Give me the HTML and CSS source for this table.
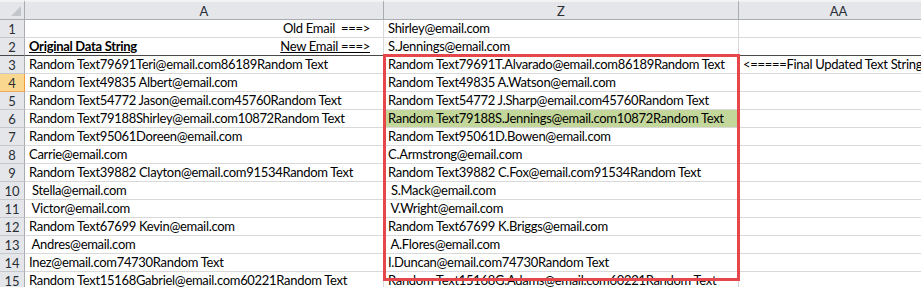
FILE: index.html
```html
<!DOCTYPE html>
<html>
<head>
<meta charset="utf-8">
<link rel="stylesheet" href="styles.css">
</head>
<body>
<div class="sheet">
  <div class="grid">
    <div class="corner"><span class="tri"></span></div>
    <div class="colhead">A</div>
    <div class="colhead">Z</div>
    <div class="colhead">AA</div>

    <div class="rowhead">1</div>
    <div class="cell right"><span class="pre">Old Email  ===&gt;</span></div>
    <div class="cell">Shirley@email.com</div>
    <div class="cell"></div>

    <div class="rowhead r2">2</div>
    <div class="cell split r2"><span class="bold u">Original Data String</span><span class="u">New Email ===&gt;</span></div>
    <div class="cell r2">S.Jennings@email.com</div>
    <div class="cell r2"></div>

    <div class="rowhead">3</div>
    <div class="cell">Random Text79691Teri@email.com86189Random Text</div>
    <div class="cell">Random Text79691T.Alvarado@email.com86189Random Text</div>
    <div class="cell">&lt;=====Final Updated Text String</div>

    <div class="rowhead active">4</div>
    <div class="cell">Random Text49835 Albert@email.com</div>
    <div class="cell">Random Text49835 A.Watson@email.com</div>
    <div class="cell"></div>

    <div class="rowhead">5</div>
    <div class="cell">Random Text54772 Jason@email.com45760Random Text</div>
    <div class="cell">Random Text54772 J.Sharp@email.com45760Random Text</div>
    <div class="cell"></div>

    <div class="rowhead">6</div>
    <div class="cell">Random Text79188Shirley@email.com10872Random Text</div>
    <div class="cell green">Random Text79188S.Jennings@email.com10872Random Text</div>
    <div class="cell"></div>

    <div class="rowhead">7</div>
    <div class="cell">Random Text95061Doreen@email.com</div>
    <div class="cell">Random Text95061D.Bowen@email.com</div>
    <div class="cell"></div>

    <div class="rowhead">8</div>
    <div class="cell">Carrie@email.com</div>
    <div class="cell">C.Armstrong@email.com</div>
    <div class="cell"></div>

    <div class="rowhead">9</div>
    <div class="cell">Random Text39882 Clayton@email.com91534Random Text</div>
    <div class="cell">Random Text39882 C.Fox@email.com91534Random Text</div>
    <div class="cell"></div>

    <div class="rowhead">10</div>
    <div class="cell"><span class="pre"> Stella@email.com</span></div>
    <div class="cell"><span class="pre"> S.Mack@email.com</span></div>
    <div class="cell"></div>

    <div class="rowhead">11</div>
    <div class="cell"><span class="pre"> Victor@email.com</span></div>
    <div class="cell"><span class="pre"> V.Wright@email.com</span></div>
    <div class="cell"></div>

    <div class="rowhead">12</div>
    <div class="cell">Random Text67699 Kevin@email.com</div>
    <div class="cell">Random Text67699 K.Briggs@email.com</div>
    <div class="cell"></div>

    <div class="rowhead">13</div>
    <div class="cell"><span class="pre"> Andres@email.com</span></div>
    <div class="cell"><span class="pre"> A.Flores@email.com</span></div>
    <div class="cell"></div>

    <div class="rowhead">14</div>
    <div class="cell">Inez@email.com74730Random Text</div>
    <div class="cell">I.Duncan@email.com74730Random Text</div>
    <div class="cell"></div>

    <div class="rowhead">15</div>
    <div class="cell">Random Text15168Gabriel@email.com60221Random Text</div>
    <div class="cell">Random Text15168G.Adams@email.com60221Random Text</div>
    <div class="cell"></div>
  </div>
  <div class="redbox"></div>
</div>
</body>
</html>
```
FILE: styles.css
```css
html, body {
  margin: 0;
  padding: 0;
  background: #ffffff;
}
.sheet {
  position: relative;
  width: 921px;
  height: 287px;
  overflow: hidden;
  font-family: "Lato", "Open Sans", sans-serif;
  font-size: 13px;
  letter-spacing: -0.3px;
  color: #000;
}
.grid {
  display: grid;
  grid-template-columns: 25px 359px 355px 200px;
  grid-template-rows: 20px repeat(15, 18px);
}
.corner {
  position: relative;
  background: #e4e6ea;
  border-top: 2px solid #f3f3f3;
  border-right: 1px solid #a9adb3;
  border-bottom: 1px solid #a9adb3;
  box-sizing: border-box;
}
.tri {
  position: absolute;
  right: 3px;
  bottom: 3px;
  width: 0;
  height: 0;
  border-left: 10px solid transparent;
  border-bottom: 10px solid #c3c7cc;
}
.colhead {
  background: #e4e6ea;
  border-top: 2px solid #f3f3f3;
  border-right: 1px solid #a9adb3;
  border-bottom: 1px solid #a9adb3;
  box-sizing: border-box;
  display: flex;
  align-items: center;
  justify-content: center;
  color: #2a2f36;
  letter-spacing: 0;
}
.rowhead {
  background: #e4e6ea;
  border-right: 1px solid #a9adb3;
  border-bottom: 1px solid #c5c9ce;
  box-sizing: border-box;
  display: flex;
  align-items: center;
  justify-content: center;
  color: #2a2f36;
  letter-spacing: 0;
}
.rowhead.active {
  background: #f9d78f;
  border-right: 1px solid #f29b3c;
  border-bottom: 1px solid #f2a95a;
}
.cell {
  border-right: 1px solid #d9d9d9;
  border-bottom: 1px solid #d9d9d9;
  box-sizing: border-box;
  padding: 0 3px 0 4px;
  display: flex;
  align-items: center;
  white-space: nowrap;
  overflow: hidden;
  line-height: 17px;
}
.cell.r2, .rowhead.r2 {
  border-bottom: 1px solid #4a4a4a;
}
.cell.right {
  justify-content: flex-end;
  padding-right: 13px;
}
.cell.split {
  justify-content: space-between;
  padding-right: 13px;
}
.cell.green {
  background: #c4d79b;
}
.pre {
  white-space: pre;
}
.bold {
  font-weight: 700;
}
.u {
  text-decoration: underline;
}
.redbox {
  position: absolute;
  left: 383px;
  top: 54px;
  width: 357px;
  height: 227px;
  border: 3px solid #e5474b;
  box-sizing: border-box;
}
```
